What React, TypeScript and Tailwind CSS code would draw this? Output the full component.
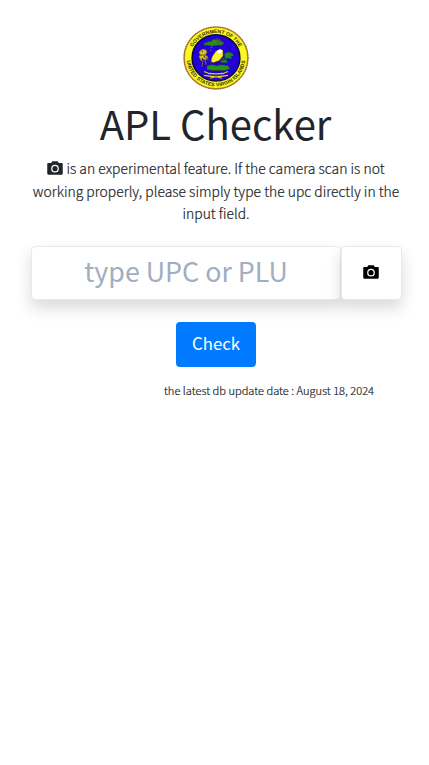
import React from "react";

function Camera({ className }: { className: string }) {
  return (
    <svg viewBox="0 0 512 448" className={className} fill="currentColor" aria-hidden="true">
      <path d="M504 92v308q0 36-32 36H40q-32 0-32-36V92q0-32 32-32h98l14-30q7-20 26-20h156q19 0 26 20l14 30h98q32 0 32 32z" />
      <circle cx="256" cy="244" r="103" fill="none" stroke="white" strokeWidth="40" />
    </svg>
  );
}

function Seal() {
  return (
    <svg viewBox="0 0 66 66" className="block h-[66px] w-[66px]" role="img" aria-label="Government of the United States Virgin Islands">
      <defs>
        <path id="seal-top" d="M7.4 33a25.6 25.6 0 0 1 51.2 0" />
        <path id="seal-bottom" d="M3.7 33a29.3 29.3 0 0 0 58.6 0" />
      </defs>
      <g transform="translate(0 .9) scale(1 .97)">
        <circle cx="33" cy="33" r="31.8" fill="#fbf820" stroke="#b87c28" strokeWidth="1.4" />
        <circle cx="33" cy="33" r="32.3" fill="none" stroke="#4d3f20" strokeWidth=".6" strokeDasharray="1 1.4" />
        <circle cx="33" cy="33" r="23.9" fill="#2400d8" stroke="#0c0838" strokeWidth="1.5" />
        <g className="font-['Liberation_Sans',sans-serif] font-bold" fill="#302d08" fontSize="5.2">
          <text textAnchor="middle"><textPath href="#seal-top" startOffset="50%" textLength="57">GOVERNMENT OF THE</textPath></text>
          <text textAnchor="middle"><textPath href="#seal-bottom" startOffset="50%" textLength="86">UNITED STATES VIRGIN ISLANDS</textPath></text>
        </g>
        <path d="M21 18l5-2 2 0 2-2 3 0 4 1 2 1 2 2-2 2-6 0-4 1-4-1-4 0z" fill="#278f18" stroke="#174b38" strokeWidth=".5" />
        <path d="M33 13l5 2m-2-1 1 3m-3 0 6 1" stroke="#76402e" strokeWidth=".8" />
        <path d="M41 29l4-2 4 1 2 3-3 0 1 3-4-1-3 1 0-3zM38 35l3-2 2 2 2 3-5 0-3-1z" fill="#218b20" stroke="#174b38" strokeWidth=".5" />
        <path d="M24 41l5-1 5 1 4-1 7 1 2 3-5 2-12 0-6-1z" fill="#299219" stroke="#174b38" strokeWidth=".6" />
        <path d="M17 26l3-2 3 1 1 2-2 3-4 0-2-2zM16 31l4-1 4 1 1 3-3 1-2-1-2 2zM20 35l-1 7m3-8 1 6" fill="#d6c823" stroke="#8c771d" strokeWidth=".9" />
        <path d="M19 26l1 1m1 4 1 2m-3 0 1 3" stroke="#28113d" strokeWidth="1" />
        <path d="M28 37l1-5 4-6 4-2 3 1 0 6-4 5-5 2z" fill="#fcf432" stroke="#5e5129" strokeWidth=".5" />
        <path d="M34 26l3-2 2 1-1 3-3 0z" fill="#fff" />
        <path d="M23 33l5 4-1 2m4-1 12-4" fill="none" stroke="#3c2828" strokeWidth="1" />
        <path d="M28 22l1 1m-1 2-1 1" stroke="#ddd66e" strokeWidth=".6" />
        <path d="M21 47l5 2q7 1 14 0l5-2m-24 4 7 1q5 1 10 0l7-1M27 54l4-1m4 0 4 1" fill="none" stroke="#e0cf28" strokeWidth="1.2" />
        <path d="M26 50.5h14" stroke="#8c8320" strokeWidth=".8" strokeDasharray="2 1" />
      </g>
    </svg>
  );
}

export default function App() {
  return (
    <main className="flex min-h-[765px] w-[429px] flex-col bg-white pt-[25px] font-['Noto_Sans_CJK_KR','Noto_Sans',sans-serif] text-[#212529]">
      <header className="flex flex-col items-center pl-[2px]">
        <Seal />
        <h1 className="mt-[5px] h-[54px] text-[40px] leading-[54px] font-normal whitespace-nowrap">APL Checker</h1>
      </header>
      <p className="mt-[7px] h-[68px] pl-[3px] text-center text-[13.9px] leading-[22.5px] font-light [-webkit-text-stroke:0.2px_#212529]">
        <Camera className="mr-[3px] inline h-[14px] w-[16px] align-[-1px]" />
        is an experimental feature. If the camera scan is not<br />
        working properly, please simply type the upc directly in the<br />
        input field.
      </p>
      <div className="mt-[21px] ml-[31px] flex h-[54px] w-[371px]">
        <input
          className="h-[54px] w-[310px] rounded-[4px] border border-[#e9e9ec] bg-white pb-[5px] text-center text-[26.8px] font-normal shadow-[0_8px_16px_rgba(0,0,0,0.15)] outline-none placeholder:text-[#a0aec0]"
          placeholder="type UPC or PLU"
          aria-label="UPC or PLU"
        />
        <button aria-label="Scan with camera" className="flex h-[54px] w-[61px] items-center justify-center rounded-[4px] border border-[#e9e9ec] bg-white pr-[2px] pb-[2px] text-black shadow-[0_8px_16px_rgba(0,0,0,0.15)]">
          <Camera className="h-[14px] w-[16px]" />
        </button>
      </div>
      <button className="mt-[22px] ml-[176px] h-[45px] w-[80px] rounded-[4px] bg-[#007bff] pb-[2px] text-[16.8px] leading-[27px] text-white">Check</button>
      <p className="mt-[14px] pr-[55px] text-right text-[11.1px] leading-[18px] font-light [-webkit-text-stroke:0.2px_#212529]">the latest db update date : August 18, 2024</p>
    </main>
  );
}
